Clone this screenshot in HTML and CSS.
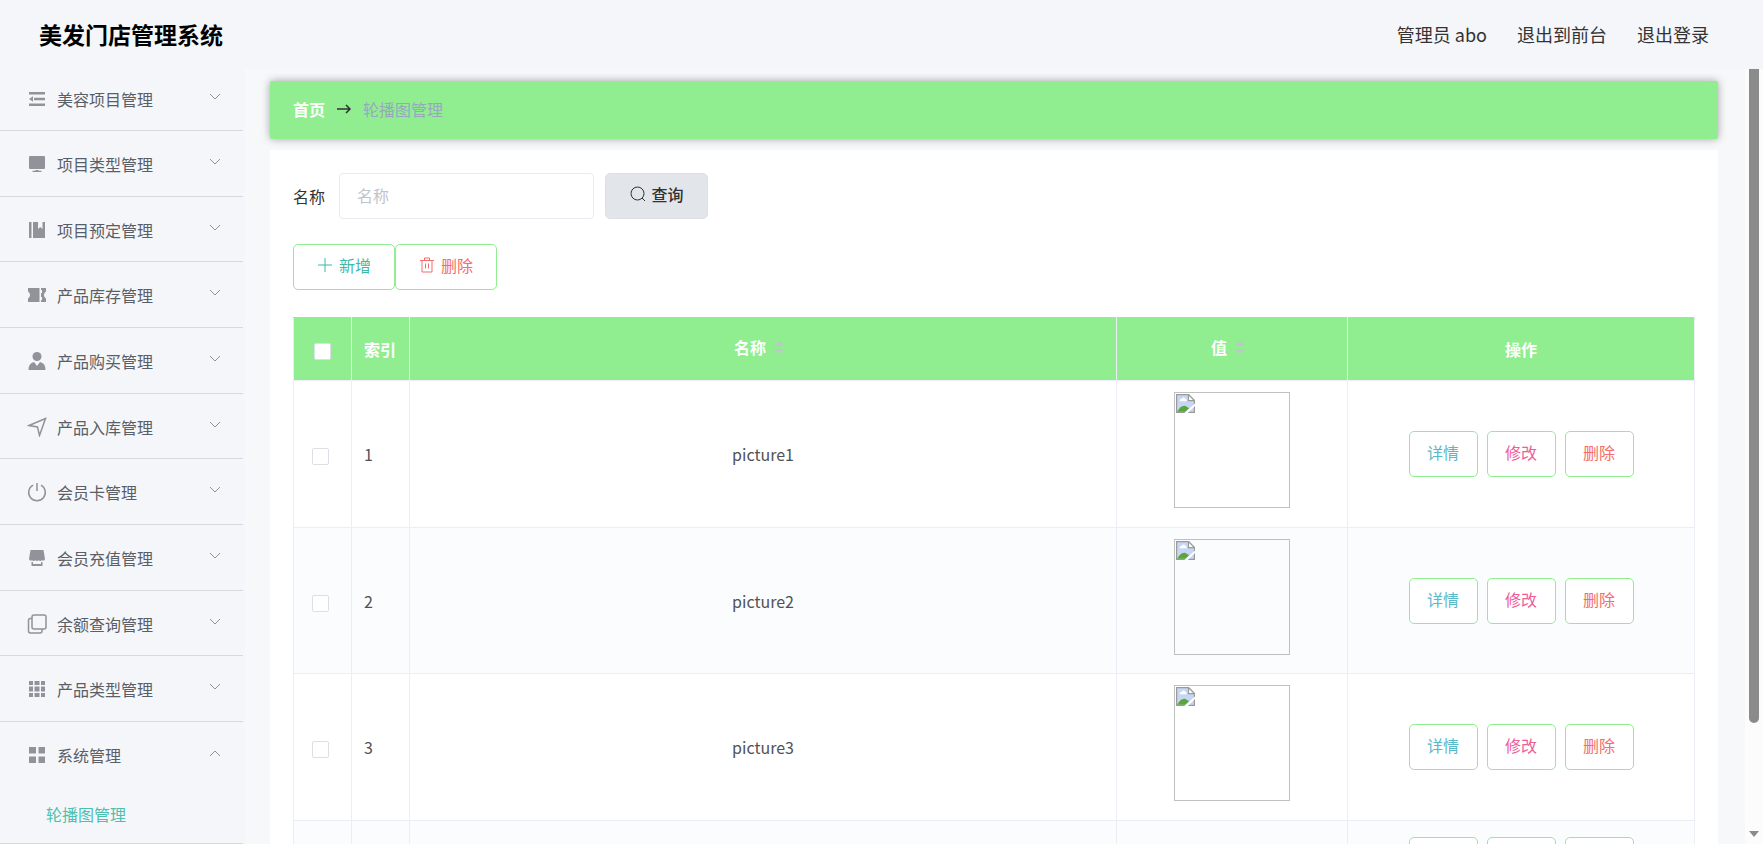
FILE: index.html
```html
<!DOCTYPE html>
<html lang="zh-CN">
<head>
    <meta charset="UTF-8">
    <title>美发门店管理系统</title>
    <link rel="stylesheet" href="styles.css">
</head>
<body>
<!-- shared icons -->
<svg class="sprite" aria-hidden="true">
    <symbol id="down" viewBox="0 0 12 8"><path d="M1 1l5 5 5-5" fill="none" stroke="currentColor"/></symbol>
    <symbol id="broken" viewBox="0 0 16 16">
        <path d="M.5.5h10l5 5v10H.5z" fill="#c6d6f3" stroke="#9a9a9a"/>
        <path d="M10.500.5v5h5z" fill="#fff" stroke="#9a9a9a"/>
        <path d="M3 6q0-2 2-2 1-2 3 0 1 0 1 2z" fill="#fff"/>
        <path d="M1 15q3-6 7-5l3 2-3 3z" fill="#5aa63a"/>
        <path d="M7 16l9-8v2l-6 6z" fill="#fff"/>
    </symbol>
    <symbol id="sort" viewBox="0 0 10 16"><path d="M5 2l5 5H0zM5 15l5-5H0z" fill="#c0c4cc"/></symbol>
</svg>

<header class="header">
    <h1 class="title">美发门店管理系统</h1>
    <div class="user">
        <span>管理员 abo</span>
        <a href="#">退出到前台</a>
        <a href="#">退出登录</a>
    </div>
</header>

<div class="container">
    <nav class="aside">
        <ul class="menu">
            <li><a href="#"><svg class="icon" viewBox="0 0 20 20"><path d="M2 3h16v2.500H2zM7 8.700h11v2.500H7zM2 14.500h16V17H2zM2 10l4-2.700v5.400z"/></svg><span>美容项目管理</span><svg class="arrow"><use href="#down"/></svg></a></li>
            <li><a href="#"><svg class="icon" viewBox="0 0 20 20"><path d="M3 2h14q1 0 1 1v11q0 1-1 1H3q-1 0-1-1V3q0-1 1-1zM8.500 16h3v.8h3V18h-9v-1.200h3z"/></svg><span>项目类型管理</span><svg class="arrow"><use href="#down"/></svg></a></li>
            <li><a href="#"><svg class="icon" viewBox="0 0 20 20"><path d="M2 2h2.500v16H2zM6 2h5v7l2.200-2 2.300 2V2H18v16H6z"/></svg><span>项目预定管理</span><svg class="arrow"><use href="#down"/></svg></a></li>
            <li><a href="#"><svg class="icon" viewBox="0 0 20 20"><path d="M1 3h11.500v14H1v-3.500q2-1 2-3.500T1 6.500zM14 3h5v3.500q-2 1-2 3.500t2 3.500V17h-5v-2h1v-3h-1V8h1V5h-1z"/></svg><span>产品库存管理</span><svg class="arrow"><use href="#down"/></svg></a></li>
            <li><a href="#"><svg class="icon" viewBox="0 0 20 20"><circle cx="10" cy="5.500" r="4.500"/><path d="M1.500 19q0-7 5.500-8l3 4 3-4q5.500 1 5.500 8z"/></svg><span>产品购买管理</span><svg class="arrow"><use href="#down"/></svg></a></li>
            <li><a href="#"><svg class="icon line" viewBox="0 0 20 20"><path d="M18.500 1.500L2 8.500l8.500 1.500L12.500 18.500z"/></svg><span>产品入库管理</span><svg class="arrow"><use href="#down"/></svg></a></li>
            <li><a href="#"><svg class="icon line" viewBox="0 0 20 20"><path d="M10 1v8M6 3.200a8.300 8.300 0 1 0 8 0"/></svg><span>会员卡管理</span><svg class="arrow"><use href="#down"/></svg></a></li>
            <li><a href="#"><svg class="icon" viewBox="0 0 20 20"><path d="M3.500 2h13L18 11q-1 2.500-3 1.200-2 1.500-3.300 0-1.700 1.500-3.400 0-1.800 1.500-3.300 0Q3 13.500 2 11zM4.500 14h1.500V16h8v-2h1.500v4h-11z"/></svg><span>会员充值管理</span><svg class="arrow"><use href="#down"/></svg></a></li>
            <li><a href="#"><svg class="icon line" viewBox="0 0 20 20"><rect x="5" y="1" width="14" height="14" rx="2"/><path d="M5 4.500H3.500a2 2 0 0 0-2 2V17a2 2 0 0 0 2 2H13a2 2 0 0 0 2-2v-2"/></svg><span>余额查询管理</span><svg class="arrow"><use href="#down"/></svg></a></li>
            <li><a href="#"><svg class="icon" viewBox="0 0 20 20"><path d="M2 2h4v4H2zM7.500 2h5v4h-5zM14 2h4v4h-4zM2 7.500h4v5H2zM7.500 7.500h5v5h-5zM14 7.500h4v5h-4zM2 14h4v4H2zM7.500 14h5v4h-5zM14 14h4v4h-4z"/></svg><span>产品类型管理</span><svg class="arrow"><use href="#down"/></svg></a></li>
            <li class="open">
                <a href="#"><svg class="icon" viewBox="0 0 20 20"><path d="M2 2h7v6.500H2zM11.500 2h6.500v6.500h-6.500zM2 11.500h7v6.500H2zM11.500 11.500h6.500v6.500h-6.500z"/></svg><span>系统管理</span><svg class="arrow"><use href="#down"/></svg></a>
                <a href="#" class="sub">轮播图管理</a>
            </li>
        </ul>
    </nav>

    <main class="main">
        <div class="breadcrumb">
            <a href="#">首页</a>
            <svg class="to" viewBox="0 0 16 12"><path d="M1 6h13M10 2l4 4-4 4"/></svg>
            <span>轮播图管理</span>
        </div>

        <div class="content">
            <form class="search">
                <label for="name">名称</label>
                <input type="text" id="name" placeholder="名称">
                <button type="button" class="btn query"><svg viewBox="0 0 16 16"><circle cx="7.500" cy="7.500" r="6.500"/><path d="M12 12l3 3"/></svg>查询</button>
            </form>

            <div class="tools">
                <button type="button" class="btn add"><svg viewBox="0 0 16 16"><path d="M8 1v14M1 8h14"/></svg>新增</button>
                <button type="button" class="btn del"><svg viewBox="0 0 16 16"><path d="M1 3.500h14M3 3.500v11.500h10V3.500M5.500 3.500V1h5v2.500M6.500 6.500v5M9.500 6.500v5"/></svg>删除</button>
            </div>

            <table class="table">
                <colgroup>
                    <col class="c-check"><col class="c-index"><col><col class="c-value"><col class="c-action">
                </colgroup>
                <thead>
                    <tr>
                        <th><input type="checkbox" aria-label="全选"></th>
                        <th class="left">索引</th>
                        <th><span class="sortable">名称<svg class="sort"><use href="#sort"/></svg></span></th>
                        <th><span class="sortable">值<svg class="sort"><use href="#sort"/></svg></span></th>
                        <th>操作</th>
                    </tr>
                </thead>
                <tbody>
                    <tr>
                        <td><input type="checkbox" aria-label="选择 1"></td>
                        <td class="left">1</td>
                        <td>picture1</td>
                        <td class="value"><div class="pic"><svg><use href="#broken"/></svg></div></td>
                        <td><div class="actions"><button type="button" class="btn info">详情</button><button type="button" class="btn edit">修改</button><button type="button" class="btn del">删除</button></div></td>
                    </tr>
                    <tr>
                        <td><input type="checkbox" aria-label="选择 2"></td>
                        <td class="left">2</td>
                        <td>picture2</td>
                        <td class="value"><div class="pic"><svg><use href="#broken"/></svg></div></td>
                        <td><div class="actions"><button type="button" class="btn info">详情</button><button type="button" class="btn edit">修改</button><button type="button" class="btn del">删除</button></div></td>
                    </tr>
                    <tr>
                        <td><input type="checkbox" aria-label="选择 3"></td>
                        <td class="left">3</td>
                        <td>picture3</td>
                        <td class="value"><div class="pic"><svg><use href="#broken"/></svg></div></td>
                        <td><div class="actions"><button type="button" class="btn info">详情</button><button type="button" class="btn edit">修改</button><button type="button" class="btn del">删除</button></div></td>
                    </tr>
                    <!-- no picture here, so the row is lower -->
                    <tr class="short">
                        <td><input type="checkbox" aria-label="选择 4"></td>
                        <td class="left">4</td>
                        <td></td>
                        <td></td>
                        <td><div class="actions"><button type="button" class="btn info">详情</button><button type="button" class="btn edit">修改</button><button type="button" class="btn del">删除</button></div></td>
                    </tr>
                </tbody>
            </table>
        </div>
    </main>

    <div class="scrollbar">
        <div class="thumb"></div>
        <svg viewBox="0 0 10 8"><path d="M0 1h10L5 7z"/></svg>
    </div>
</div>
</body>
</html>
```
FILE: styles.css
```css
* {
    box-sizing: border-box;
}
body {
    margin: 0;
    height: 100vh;
    overflow: hidden;
    display: flex;
    flex-direction: column;
    font-family: "Noto Sans CJK SC", sans-serif;
    font-size: 16px;
    line-height: 24px;
    color: #333;
    background: #f7f8fa;
}
a {
    color: inherit;
    text-decoration: none;
}
.sprite {
    display: none;
}

/* header */
.header {
    flex: none;
    height: 69px;
    padding: 0 54px 2px 39px;
    display: flex;
    align-items: center;
    justify-content: space-between;
    background: #f4f6fa;
}
.title {
    margin: 0;
    font-size: 23px;
    font-weight: bold;
    color: #000;
}
.user {
    display: flex;
    gap: 30px;
    font-size: 18px;
}

.container {
    flex: 1;
    min-height: 0;
    display: flex;
}

/* side menu */
.aside {
    flex: none;
    width: 245px;
    padding-right: 2px;
    overflow: hidden;
    background: #f4f6fa;
}
.menu {
    margin: 0;
    padding: 0;
    list-style: none;
}
.menu li {
    height: 66px;
    padding-top: 3px;
    border-bottom: 1px solid #d6d9de;
}
.menu li:nth-child(3n) {
    height: 65px;
}
.menu li:first-child {
    height: 62px;
    padding-top: 0;
}
.menu .open {
    height: auto;
}
.menu a {
    height: 60px;
    padding: 0 22px 0 27px;
    display: flex;
    align-items: center;
    color: #5a5e66;
}
.icon {
    width: 20px;
    height: 20px;
    margin-right: 10px;
    fill: #909399;
}
.icon.line {
    fill: none;
    stroke: #909399;
    stroke-width: 1.5;
}
.arrow {
    width: 12px;
    height: 8px;
    margin: 0 0 5px auto;
    color: #909399;
}
.open .arrow {
    transform: rotate(180deg);
}
.menu .sub {
    height: 58px;
    padding-left: 46px;
    color: #4dbfae;
}

/* main area */
.main {
    flex: 1;
    min-width: 0;
    padding: 12px 27px 0 25px;
    overflow: hidden;
}
.breadcrumb {
    height: 58px;
    margin-bottom: 11px;
    padding: 0 23px 2px;
    display: flex;
    align-items: center;
    gap: 11px;
    border-radius: 2px;
    background: #90ee90;
    box-shadow: 0 0 8px rgba(0, 0, 0, .35);
    color: #97a8be;
}
.breadcrumb a {
    font-weight: bold;
    color: #fff;
}
.to {
    width: 16px;
    height: 12px;
    fill: none;
    stroke: #303133;
    stroke-width: 1.5;
}
.content {
    padding: 23px;
    background: #fff;
}
.search {
    display: flex;
    align-items: center;
    margin-bottom: 25px;
}
.search label {
    margin-right: 14px;
}
.search input {
    width: 255px;
    height: 46px;
    margin-right: 11px;
    padding: 0 17px 2px;
    border: 1px solid #e8ecf2;
    border-radius: 4px;
    font: inherit;
}
.search input::placeholder {
    color: #c0c4cc;
}
.btn {
    height: 46px;
    padding: 0 0 4px;
    display: flex;
    align-items: center;
    justify-content: center;
    gap: 6px;
    border: 1px solid #90ee90;
    border-radius: 5px;
    background: #fff;
    font: inherit;
}
.btn svg {
    width: 16px;
    height: 16px;
    fill: none;
    stroke: currentColor;
}
.query {
    width: 103px;
    border-color: #dcdfe6;
    background: #e2e5e9;
    color: #303133;
    font-weight: 500;
}
.tools {
    display: flex;
    margin-bottom: 27px;
}
.tools .btn {
    width: 102px;
}
.add {
    color: #3fb8a8;
}
.info {
    color: #5bb8c8;
}
.edit {
    color: #ee6099;
}
.del {
    color: #f56c6c;
}

/* table */
.table {
    width: 100%;
    table-layout: fixed;
    border-collapse: collapse;
    text-align: center;
}
.c-check,
.c-index {
    width: 58px;
}
.c-value {
    width: 231px;
}
.c-action {
    width: 347px;
}
.table th,
.table td {
    padding: 0;
    border: 1px solid #ebeef5;
}
.table th {
    height: 63px;
    border-top-color: #90ee90;
    background: #90ee90;
    color: #fff;
    font-weight: bold;
}
.table td {
    height: 147px;
    color: #505256;
}
.table tr:nth-child(even) td {
    height: 146px;
    background: #fbfcfe;
}
.table .left {
    padding-left: 12px;
    text-align: left;
}
.table .value {
    padding: 11px 0 0;
    vertical-align: top;
}
.table input {
    appearance: none;
    width: 17px;
    height: 17px;
    margin: 0;
    vertical-align: middle;
    border: 1px solid #dcdfe6;
    border-radius: 2px;
    background: #fff;
}
.table td input {
    margin-right: 4px;
}
.sortable {
    display: inline-flex;
    align-items: center;
    gap: 8px;
    padding: 0 8px 4px 0;
}
.sort {
    width: 10px;
    height: 16px;
}
.pic {
    width: 116px;
    height: 116px;
    margin: 0 auto;
    padding: 1px;
    border: 1px solid #c0c0c0;
    text-align: left;
}
.pic svg {
    display: block;
    width: 19px;
    height: 19px;
}
.actions {
    display: flex;
    justify-content: center;
    gap: 9px;
}
.actions .btn {
    width: 69px;
}
.table .short:nth-child(even) td {
    height: 79px;
}

/* scrollbar of the main area */
.scrollbar {
    flex: none;
    width: 18px;
    display: flex;
    flex-direction: column;
    align-items: center;
    justify-content: space-between;
    padding-bottom: 6px;
    background: #fcfcfc;
}
.thumb {
    width: 10px;
    height: 85%;
    border-radius: 0 0 5px 5px;
    background: #8b8b8b;
}
.scrollbar svg {
    width: 10px;
    height: 8px;
    fill: #8b8b8b;
}
```
